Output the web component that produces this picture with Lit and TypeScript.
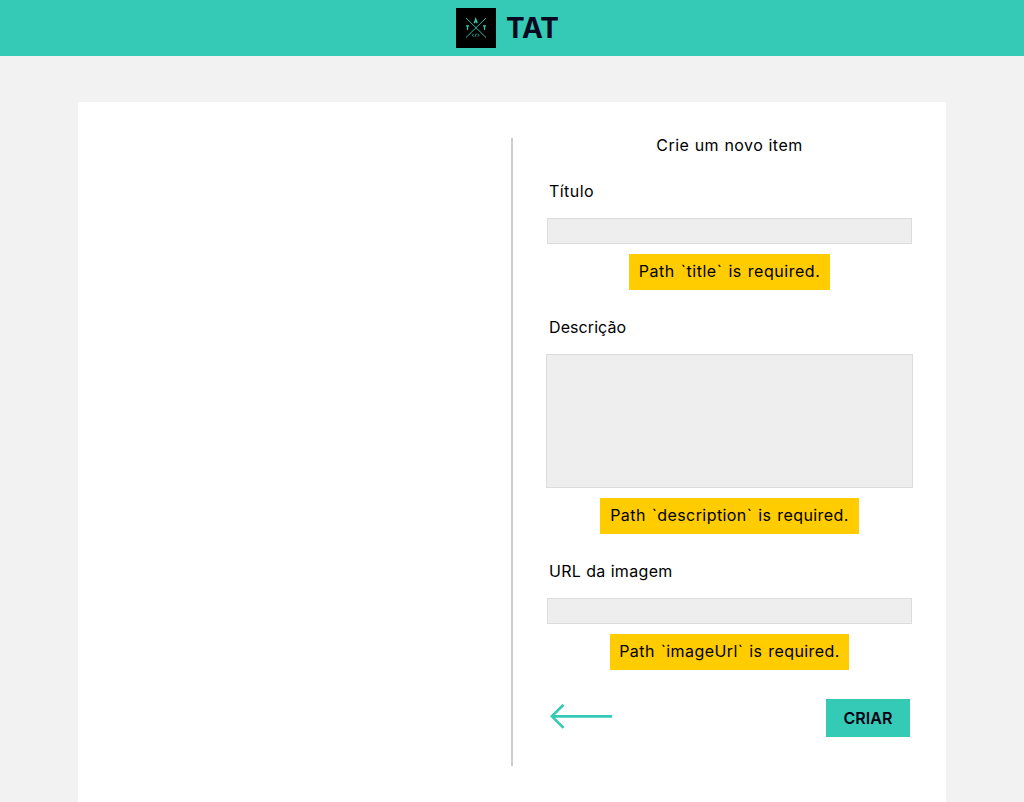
import { LitElement, html, css } from "lit";
import { customElement } from "lit/decorators.js";

@customElement("app-root")
export class AppRoot extends LitElement {
  static styles = css`
    :host { display: block; height: 802px; overflow: hidden; background: #f2f2f2; color: #000; font: 16px/20px Inter, sans-serif; }
    * { box-sizing: border-box; }
    .header { height: 56px; background: #35cab5; display: flex; padding: 8px 0 0 456px; gap: 10px; }
    .logo { display: block; width: 40px; height: 40px; background: #000; flex: none; }
    .brand { font-size: 28px; line-height: 40px; font-weight: 700; letter-spacing: -0.2px; color: #080820; }
    .card { width: 868px; height: 700px; margin: 46px 0 0 78px; background: #fff; display: grid; grid-template-columns: 433px 2px 433px; padding-top: 36px; }
    .divider { height: 628px; background: #cbcbd0; }
    .form { padding: 0 33px; display: flex; flex-direction: column; align-items: center; }
    .line { white-space: nowrap; display: block; }
    .heading { margin: -3px 0 26px; font-size: 16px; line-height: 20px; font-weight: 400; letter-spacing: 0.45px; word-spacing: 0.4px; }
    .field { width: 100%; display: flex; flex-direction: column; align-items: center; height: 136px; }
    .field.tall { height: 244px; }
    .label { align-self: flex-start; margin-left: 3px; letter-spacing: 0.32px; word-spacing: 0.2px; }
    .title .label { letter-spacing: 0.45px; }
    .tall .label { letter-spacing: 0.08px; }
    .input { display: block; margin: 17px 0 10px; width: 365px; height: 26px; border: 1px solid #dcdcdc; background: #eee; border-radius: 0; resize: none; padding: 0 4px; outline: none; }
    .tall .input { width: 367px; height: 134px; }
    .error { height: 36px; line-height: 34px; background: #fc0; text-align: center; letter-spacing: 0.42px; word-spacing: 1px; white-space: nowrap; }
    .title .error { width: 201px; letter-spacing: 0.53px; }
    .tall .error { width: 259px; }
    .image .error { width: 239px; }
    .actions { width: 361px; display: flex; justify-content: space-between; margin-top: 2px; }
    .arrow { width: 62px; height: 26px; margin: 4px 0 0 1px; }
    .create { width: 84px; height: 38px; padding: 0; border: 0; background: #35cab5; font: 600 16px/38px Inter, sans-serif; letter-spacing: 0.1px; color: #000014; }
  `;

  render() {
    return html`
      <header class="header">
        <svg class="logo" viewBox="0 0 40 40" fill="none" stroke="#35cab5">
          <path d="M10 10L30 29.5M30 10L10 29.5" stroke-width=".9"/>
          <path d="M18.2 15.2L19.7 10.8L21.2 15.2M18.8 13.8H20.6M10 17.8H13M11.5 17.8V22M27 17.8H30M28.5 17.8V22" stroke-width="1.2"/>
          <path d="M17.6 25.8L16.3 27.2L17.6 28.6M19 28.8L20.3 25.6M21.7 25.8L23 27.2L21.7 28.6" stroke-width=".8"/>
        </svg>
        <span class="brand">TAT</span>
      </header>
      <main class="card">
        <section></section>
        <div class="divider"></div>
        <form class="form">
          <h1 class="heading line">Crie um novo item</h1>
          <div class="field title">
            <label class="label line" for="title">Título</label>
            <input class="input" id="title">
            <div class="error"><span>Path \`title\` is required.</span></div>
          </div>
          <div class="field tall">
            <label class="label line" for="description">Descrição</label>
            <textarea class="input" id="description"></textarea>
            <div class="error"><span>Path \`description\` is required.</span></div>
          </div>
          <div class="field image">
            <label class="label line" for="image">URL da imagem</label>
            <input class="input" id="image">
            <div class="error"><span>Path \`imageUrl\` is required.</span></div>
          </div>
          <div class="actions">
            <svg class="arrow" viewBox="0 0 62 26" fill="none" stroke="#35cab5" stroke-width="2.6"><path d="M13.5 1.7L1.8 13.2L13.5 24.8M1.8 13.4H62"/></svg>
            <button class="create" type="button">CRIAR</button>
          </div>
        </form>
      </main>`;
  }
}
